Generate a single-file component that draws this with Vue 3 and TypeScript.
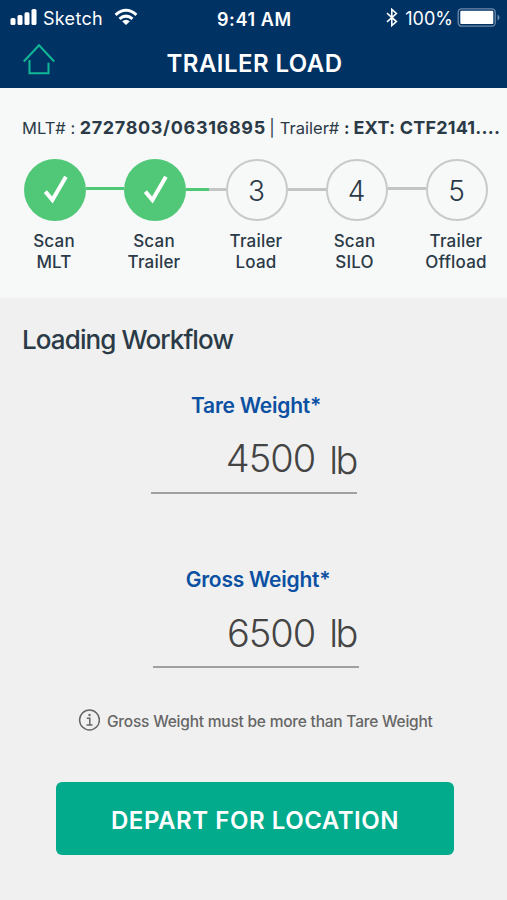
<script setup lang="ts">
interface Step {
  id: number
  label: string[]
  done: boolean
  link?: string
}

interface Field {
  name: string
  label: string
  value: string
  unit: string
}

const steps: Step[] = [
  { id: 1, label: ['Scan', 'MLT'], done: true, link: 'full raised' },
  { id: 2, label: ['Scan', 'Trailer'], done: true, link: 'partial' },
  { id: 3, label: ['Trailer', 'Load'], done: false, link: 'empty' },
  { id: 4, label: ['Scan', 'SILO'], done: false, link: 'empty raised' },
  { id: 5, label: ['Trailer', 'Offload'], done: false },
]

const fields: Field[] = [
  { name: 'tare', label: 'Tare Weight*', value: '4500', unit: 'lb' },
  { name: 'gross', label: 'Gross Weight*', value: '6500', unit: 'lb' },
]
</script>

<template>
  <div class="screen">
    <header class="header">
      <div class="status">
        <div class="status-left">
          <svg class="signal" width="28" height="18" viewBox="0 0 28 18" fill="#fff">
            <rect x="0.5" y="10" width="5" height="7" rx="1.6" />
            <rect x="7.5" y="7" width="5" height="10" rx="1.6" />
            <rect x="14.5" y="4.300" width="5" height="12.700" rx="1.6" />
            <rect x="21.500" y="1" width="5" height="16" rx="1.6" />
          </svg>
          <span class="carrier">Sketch</span>
          <svg class="wifi" width="24" height="18" viewBox="0 0 24 18" fill="none" stroke="#fff" stroke-width="3">
            <path d="M1.600 6.800Q12 -2.400 22.400 6.800" />
            <path d="M5.500 10.800Q12 5.400 18.500 10.800" />
            <path d="M12 17L8.100 13.200Q12 10.100 15.900 13.200Z" fill="#fff" stroke="none" />
          </svg>
        </div>
        <span class="time">9:41 AM</span>
        <div class="status-right">
          <svg class="bluetooth" width="12" height="20" viewBox="0 0 12 20" fill="none" stroke="#fff" stroke-width="1.6">
            <path d="M1 5.200L10.400 13.600L5.800 17.600V1.400L10.400 5.500L1 13.900" />
          </svg>
          <span class="percent">100%</span>
          <svg class="battery" width="43" height="20" viewBox="0 0 43 20">
            <rect x="1.200" y="0.800" width="37" height="17.400" rx="3.500" fill="none" stroke="#6f8aab" stroke-width="1.300" />
            <rect x="3.300" y="2.800" width="33" height="13.300" rx="1" fill="#fff" />
            <path d="M40.500 6.500Q42.500 7.500 42.500 9.500T40.500 12.500Z" fill="#6f8aab" />
          </svg>
        </div>
      </div>
      <div class="nav">
        <svg class="home" width="32" height="32" viewBox="0 0 32 32" fill="none" stroke="#12b795" stroke-width="2">
          <path d="M0.800 18.500L16 2.200L31.200 18.500" />
          <path d="M6.500 17V30.300H25.500V19.800" />
        </svg>
        <h1 class="title">TRAILER LOAD</h1>
      </div>
    </header>

    <section class="summary">
      <div class="ids">
        <span class="key">MLT# :</span>
        <b class="mlt">2727803/06316895</b>
        <span class="bar">|</span>
        <span class="key">Trailer# <b>:</b></span>
        <b class="trailer">EXT: CTF2141....</b>
      </div>
      <div class="steps">
        <template v-for="step in steps" :key="step.id">
          <div class="step">
            <div class="circle" :class="{ done: step.done }">
              <svg v-if="step.done" width="28" height="32" viewBox="0 0 28 32" fill="none" stroke="#fff" stroke-width="4">
                <path d="M4.400 17.600L11.400 26L24.900 2.800" />
              </svg>
              <template v-else>{{ step.id }}</template>
            </div>
            <div class="step-label">
              <span v-for="line in step.label" :key="line">{{ line }}</span>
            </div>
          </div>
          <div v-if="step.link" class="link" :class="step.link"></div>
        </template>
      </div>
    </section>

    <main class="workflow">
      <h2 class="heading">Loading Workflow</h2>
      <div v-for="field in fields" :key="field.name" class="field" :class="field.name">
        <div class="field-label">{{ field.label }}</div>
        <div class="field-value">
          <span class="number">{{ field.value }}</span>
          <span class="unit">{{ field.unit }}</span>
        </div>
      </div>
      <p class="note">
        <svg width="22" height="22" viewBox="0 0 22 22" fill="none" stroke="#666" stroke-width="1.500">
          <circle cx="11.500" cy="11" r="9.900" />
          <path d="M8.800 9.200H11.800V15.600M8.500 15.900H14.500" />
          <circle cx="11.500" cy="6" r="1.200" fill="#666" stroke="none" />
        </svg>
        <span>Gross Weight must be more than Tare Weight</span>
      </p>
      <button class="depart" type="button">DEPART FOR LOCATION</button>
    </main>
  </div>
</template>

<style>
body {
  background: #f0f0f0;
}
</style>

<style scoped>
.screen {
  width: 507px;
  height: 900px;
  overflow: hidden;
  background: #f0f0f0;
  color: #2b3a47;
  font-family: Inter, "Liberation Sans", sans-serif;
  white-space: nowrap;
}

h1,
h2,
p {
  margin: 0;
}

svg {
  display: block;
  flex: none;
}

.header {
  height: 88px;
  background: #003264;
  color: #fff;
}

.status {
  display: grid;
  grid-template-columns: 1fr 76px 1fr;
  align-items: center;
  height: 36px;
  padding: 0 7px 0 10px;
  font-size: 18px;
}

.status-left,
.status-right {
  display: flex;
  align-items: center;
}

.status-right {
  justify-content: flex-end;
}

.signal {
  margin: 0 5px 2px 0;
}

.carrier {
  letter-spacing: 0.3px;
}

.wifi {
  margin: 0 0 2px 11px;
}

.time {
  padding-top: 2px;
  font-weight: 600;
  letter-spacing: 0.6px;
}

.bluetooth {
  margin: 0 7px 1px 0;
}

.percent {
  margin-right: 4px;
}

.nav {
  display: grid;
  grid-template-columns: 1fr auto 1fr;
  align-items: center;
  height: 52px;
  padding: 0 21px 0 23px;
}

.home {
  margin-bottom: 6px;
}

.title {
  padding-top: 3px;
  font-size: 24px;
  font-weight: 600;
  line-height: 30px;
  letter-spacing: 0.45px;
}

.summary {
  height: 210px;
  background: #f7f8f8;
}

.ids {
  display: flex;
  align-items: baseline;
  height: 71px;
  padding: 29px 0 0 22px;
  box-sizing: border-box;
  font-size: 16.5px;
  line-height: 22px;
}

.ids > b {
  font-size: 18px;
  font-weight: 700;
}

.mlt {
  margin-left: 4.5px;
  letter-spacing: 0.66px;
}

.bar {
  margin: 0 5px 0 3.5px;
}

.trailer {
  margin-left: 4px;
  letter-spacing: 0.2px;
}

.steps {
  display: flex;
  padding-left: 24px;
}

.step {
  display: flex;
  flex-direction: column;
  align-items: center;
  width: 62px;
}

.circle {
  display: flex;
  align-items: center;
  justify-content: center;
  width: 62px;
  height: 62px;
  box-sizing: border-box;
  padding: 2px 1px 0 0;
  border: 2px solid #c9c9c9;
  border-radius: 50%;
  font-size: 28px;
  font-weight: 300;
}

.circle.done {
  padding: 0;
  border: 0;
  background: #51c878;
}

.step-label {
  display: flex;
  flex-direction: column;
  align-items: center;
  margin: 10px 2px 0 0;
  font-size: 17px;
  font-weight: 500;
  line-height: 21px;
  letter-spacing: 0.2px;
}

.step:nth-of-type(7) .step-label {
  margin-right: 5px;
}

.link {
  width: 38px;
  height: 3px;
  margin-top: 29px;
  background: #c4c4c4;
}

.link.raised {
  margin-top: 28px;
}

.link.full {
  background: #51c878;
}

.link.partial {
  width: 40px;
  background: linear-gradient(to right, #51c878 23px, #c4c4c4 23px);
}

.workflow {
  display: flex;
  flex-direction: column;
  padding-top: 26px;
}

.heading {
  margin-left: 22px;
  font-size: 26px;
  font-weight: 500;
  line-height: 32px;
  letter-spacing: -0.9px;
}

.field {
  width: 206px;
  margin-left: 151px;
}

.field.tare {
  margin-top: 36px;
}

.field.gross {
  margin: 72px 0 0 153px;
}

.field-label {
  padding: 1px 0 0 4px;
  color: #0b50a2;
  font-size: 21px;
  font-weight: 600;
  line-height: 26px;
  letter-spacing: -0.25px;
  text-align: center;
}

.field-value {
  display: flex;
  justify-content: flex-end;
  align-items: baseline;
  height: 75px;
  box-sizing: border-box;
  padding-top: 16px;
  border-bottom: 2px solid #a0a0a0;
  color: #444;
  font-size: 38px;
  font-weight: 300;
  line-height: 46px;
}

.number {
  letter-spacing: -1px;
}

.unit {
  margin: 0 1px 0 14px;
  letter-spacing: -2.5px;
}

.tare .unit {
  padding-top: 2px;
  align-self: flex-start;
}

.gross .field-value {
  padding: 17px 2px 0 0;
}

.note {
  display: flex;
  align-items: center;
  height: 24px;
  margin: 40px 0 0 78px;
  color: #666;
  font-size: 15.5px;
  font-weight: 500;
  letter-spacing: -0.22px;
}

.note span {
  margin-left: 7px;
  padding-top: 2px;
}

.depart {
  width: 398px;
  height: 73px;
  margin: 50px 0 0 56px;
  padding: 4px 0 0;
  border: 0;
  border-radius: 6px;
  background: #03ab8d;
  color: #fff;
  font-family: inherit;
  font-size: 24px;
  font-weight: 600;
  letter-spacing: 0.55px;
}
</style>
